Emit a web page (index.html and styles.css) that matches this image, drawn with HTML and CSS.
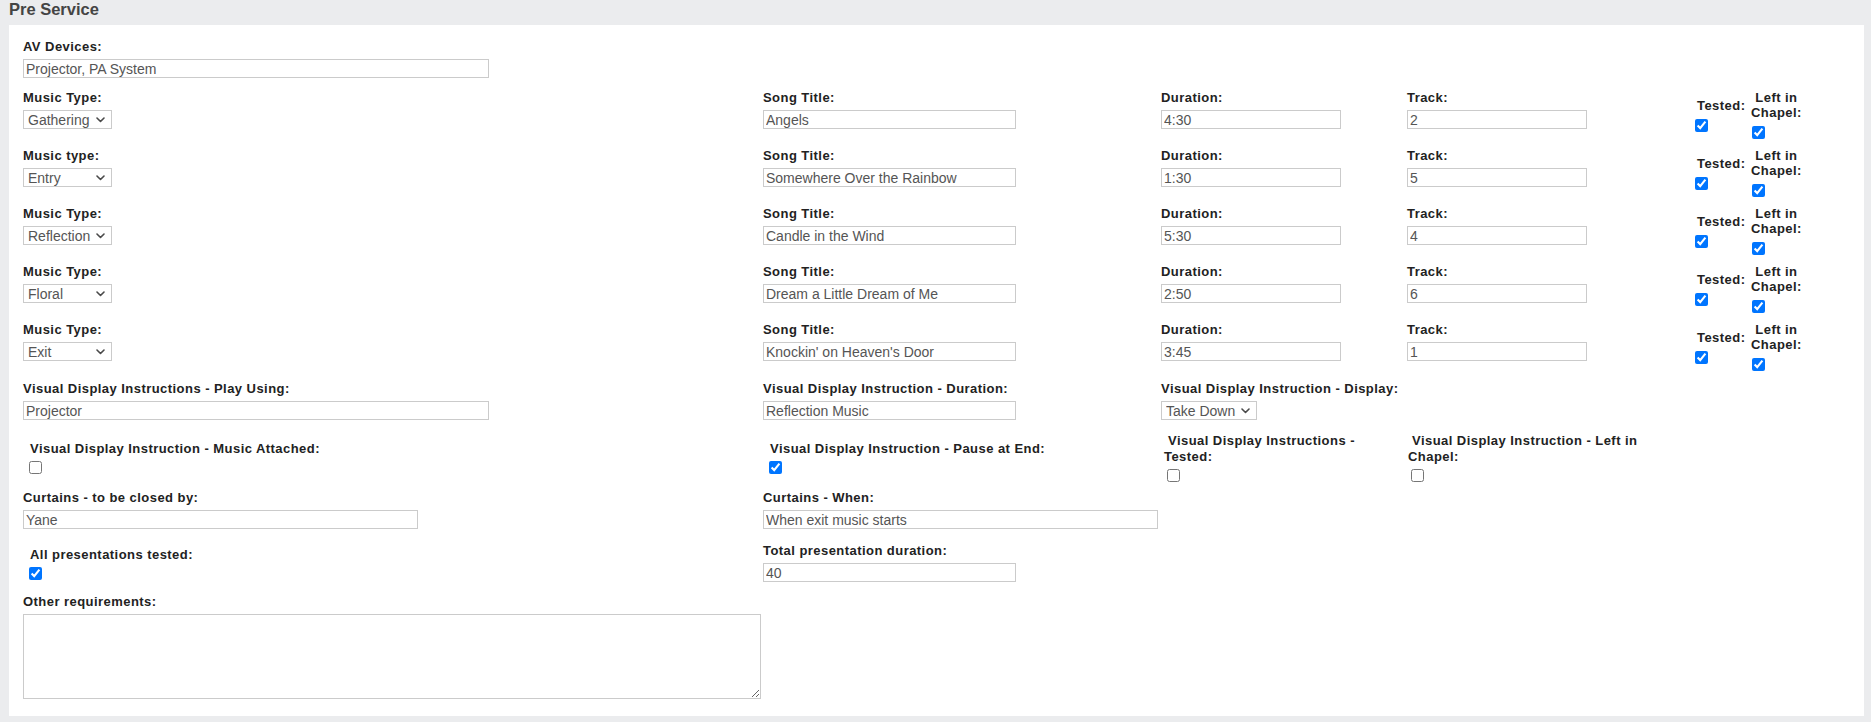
FILE: index.html
```html
<!DOCTYPE html>
<html lang="en">
<head>
<meta charset="utf-8">
<title>Pre Service</title>
<link rel="stylesheet" href="styles.css">
</head>
<body>
<div class="page">
  <h2 class="section-title">Pre Service</h2>
  <div class="panel">

    <div class="row row-av">
      <div class="field">
        <label class="lbl">AV Devices:</label>
        <input class="txt w-wide" type="text" value="Projector, PA System">
      </div>
    </div>

    <div class="row row-music">
      <div class="field">
        <label class="lbl">Music Type:</label>
        <span class="sel"><select class="w-type"><option selected>Gathering</option><option>Entry</option><option>Reflection</option><option>Floral</option><option>Exit</option></select><svg class="chev" width="9" height="6" viewBox="0 0 9 6"><polyline points="1,1 4.5,4.5 8,1" /></svg></span>
      </div>
      <div class="field"><label class="lbl">Song Title:</label><input class="txt w-song" type="text" value="Angels"></div>
      <div class="field"><label class="lbl">Duration:</label><input class="txt w-short" type="text" value="4:30"></div>
      <div class="field"><label class="lbl">Track:</label><input class="txt w-short" type="text" value="2"></div>
      <div class="checks">
        <div class="stack stack-tested"><span class="ck-lbl">Tested:</span><input type="checkbox" checked></div>
        <div class="stack stack-left"><span class="ck-lbl">Left in Chapel:</span><input type="checkbox" checked></div>
      </div>
    </div>

    <div class="row row-music">
      <div class="field">
        <label class="lbl">Music type:</label>
        <span class="sel"><select class="w-type"><option>Gathering</option><option selected>Entry</option><option>Reflection</option><option>Floral</option><option>Exit</option></select><svg class="chev" width="9" height="6" viewBox="0 0 9 6"><polyline points="1,1 4.5,4.5 8,1" /></svg></span>
      </div>
      <div class="field"><label class="lbl">Song Title:</label><input class="txt w-song" type="text" value="Somewhere Over the Rainbow"></div>
      <div class="field"><label class="lbl">Duration:</label><input class="txt w-short" type="text" value="1:30"></div>
      <div class="field"><label class="lbl">Track:</label><input class="txt w-short" type="text" value="5"></div>
      <div class="checks">
        <div class="stack stack-tested"><span class="ck-lbl">Tested:</span><input type="checkbox" checked></div>
        <div class="stack stack-left"><span class="ck-lbl">Left in Chapel:</span><input type="checkbox" checked></div>
      </div>
    </div>

    <div class="row row-music">
      <div class="field">
        <label class="lbl">Music Type:</label>
        <span class="sel"><select class="w-type"><option>Gathering</option><option>Entry</option><option selected>Reflection</option><option>Floral</option><option>Exit</option></select><svg class="chev" width="9" height="6" viewBox="0 0 9 6"><polyline points="1,1 4.5,4.5 8,1" /></svg></span>
      </div>
      <div class="field"><label class="lbl">Song Title:</label><input class="txt w-song" type="text" value="Candle in the Wind"></div>
      <div class="field"><label class="lbl">Duration:</label><input class="txt w-short" type="text" value="5:30"></div>
      <div class="field"><label class="lbl">Track:</label><input class="txt w-short" type="text" value="4"></div>
      <div class="checks">
        <div class="stack stack-tested"><span class="ck-lbl">Tested:</span><input type="checkbox" checked></div>
        <div class="stack stack-left"><span class="ck-lbl">Left in Chapel:</span><input type="checkbox" checked></div>
      </div>
    </div>

    <div class="row row-music">
      <div class="field">
        <label class="lbl">Music Type:</label>
        <span class="sel"><select class="w-type"><option>Gathering</option><option>Entry</option><option>Reflection</option><option selected>Floral</option><option>Exit</option></select><svg class="chev" width="9" height="6" viewBox="0 0 9 6"><polyline points="1,1 4.5,4.5 8,1" /></svg></span>
      </div>
      <div class="field"><label class="lbl">Song Title:</label><input class="txt w-song" type="text" value="Dream a Little Dream of Me"></div>
      <div class="field"><label class="lbl">Duration:</label><input class="txt w-short" type="text" value="2:50"></div>
      <div class="field"><label class="lbl">Track:</label><input class="txt w-short" type="text" value="6"></div>
      <div class="checks">
        <div class="stack stack-tested"><span class="ck-lbl">Tested:</span><input type="checkbox" checked></div>
        <div class="stack stack-left"><span class="ck-lbl">Left in Chapel:</span><input type="checkbox" checked></div>
      </div>
    </div>

    <div class="row row-music">
      <div class="field">
        <label class="lbl">Music Type:</label>
        <span class="sel"><select class="w-type"><option>Gathering</option><option>Entry</option><option>Reflection</option><option>Floral</option><option selected>Exit</option></select><svg class="chev" width="9" height="6" viewBox="0 0 9 6"><polyline points="1,1 4.5,4.5 8,1" /></svg></span>
      </div>
      <div class="field"><label class="lbl">Song Title:</label><input class="txt w-song" type="text" value="Knockin' on Heaven's Door"></div>
      <div class="field"><label class="lbl">Duration:</label><input class="txt w-short" type="text" value="3:45"></div>
      <div class="field"><label class="lbl">Track:</label><input class="txt w-short" type="text" value="1"></div>
      <div class="checks">
        <div class="stack stack-tested"><span class="ck-lbl">Tested:</span><input type="checkbox" checked></div>
        <div class="stack stack-left"><span class="ck-lbl">Left in Chapel:</span><input type="checkbox" checked></div>
      </div>
    </div>

    <div class="row row-vdi">
      <div class="field"><label class="lbl">Visual Display Instructions - Play Using:</label><input class="txt w-wide" type="text" value="Projector"></div>
      <div class="field"><label class="lbl">Visual Display Instruction - Duration:</label><input class="txt w-song" type="text" value="Reflection Music"></div>
      <div class="field">
        <label class="lbl">Visual Display Instruction - Display:</label>
        <span class="sel"><select class="w-display"><option selected>Take Down</option><option>Leave Up</option></select><svg class="chev" width="9" height="6" viewBox="0 0 9 6"><polyline points="1,1 4.5,4.5 8,1" /></svg></span>
      </div>
    </div>

    <div class="row row-flags">
      <div class="flag flag-single"><label class="flag-lbl">Visual Display Instruction - Music Attached:</label><input type="checkbox"></div>
      <div class="flag flag-single"><label class="flag-lbl">Visual Display Instruction - Pause at End:</label><input type="checkbox" checked></div>
      <div class="flag"><label class="flag-lbl">Visual Display Instructions - Tested:</label><input type="checkbox"></div>
      <div class="flag flag-tight"><label class="flag-lbl">Visual Display Instruction - Left in Chapel:</label><input type="checkbox"></div>
    </div>

    <div class="row row-curtains">
      <div class="field"><label class="lbl">Curtains - to be closed by:</label><input class="txt w-mid" type="text" value="Yane"></div>
      <div class="field"><label class="lbl">Curtains - When:</label><input class="txt w-mid" type="text" value="When exit music starts"></div>
    </div>

    <div class="row row-totals">
      <div class="flag flag-single flag-low"><label class="flag-lbl">All presentations tested:</label><input type="checkbox" checked></div>
      <div class="field"><label class="lbl">Total presentation duration:</label><input class="txt w-song" type="text" value="40"></div>
    </div>

    <div class="row row-other">
      <div class="field field-notes"><label class="lbl">Other requirements:</label><textarea class="notes"></textarea></div>
    </div>

  </div>
</div>
</body>
</html>
```

FILE: styles.css
```css
html, body {
  margin: 0;
  padding: 0;
}

body {
  background: #ebecee;
  font-family: "Liberation Sans", Arial, sans-serif;
  color: #222;
}

.page {
  display: flex;
  flex-direction: column;
  height: 722px;
}

.section-title {
  margin: 0;
  height: 25px;
  padding-left: 9px;
  font-size: 16.5px;
  line-height: 19px;
  font-weight: bold;
  color: #444;
}

.panel {
  background: #fff;
  margin: 0 7px 6px 9px;
  padding: 14px 14px 17px 14px;
  display: flex;
  flex-direction: column;
  flex: 1;
}

/* every form row shares the same column template */
.row {
  display: grid;
  grid-template-columns: 740px 398px 246px 288px 1fr;
  align-items: start;
}

.row-av + .row-music { margin-top: 12px; }
.row-music + .row-music { margin-top: 6px; }
.row-vdi { margin-top: 7px; }
.row-flags { margin-top: 6px; padding-top: 7px; align-items: center; }
.row-curtains { margin-top: 6px; }
.row-totals { margin-top: 14px; align-items: center; }
.row-other { margin-top: 12px; }

.field {
  display: flex;
  flex-direction: column;
  align-items: flex-start;
}

.field-notes {
  grid-column: 1 / span 2;
}

.lbl {
  display: block;
  font-size: 13px;
  line-height: 15px;
  font-weight: bold;
  letter-spacing: 0.45px;
  color: #222;
  margin-bottom: 5px;
  white-space: nowrap;
}

.txt {
  box-sizing: border-box;
  height: 19px;
  margin: 0;
  border: 1px solid #cbcbcb;
  padding: 0 2px;
  font-family: "Liberation Sans", Arial, sans-serif;
  font-size: 14px;
  color: #555;
  background: #fff;
  outline: none;
}

.w-wide { width: 466px; }
.w-song { width: 253px; }
.w-short { width: 180px; }
.w-mid { width: 395px; }

/* select with a drawn chevron */
.sel {
  position: relative;
  display: inline-block;
  height: 19px;
}

.sel select {
  -webkit-appearance: none;
  appearance: none;
  box-sizing: border-box;
  height: 19px;
  margin: 0;
  border: 1px solid #cbcbcb;
  border-radius: 0;
  padding: 0 14px 0 4px;
  font-family: "Liberation Sans", Arial, sans-serif;
  font-size: 14px;
  color: #555;
  background: #fff;
  outline: none;
}

.w-type { width: 89px; }
.w-display { width: 96px; }

.chev {
  position: absolute;
  right: 7px;
  top: 7px;
  pointer-events: none;
}

.chev polyline {
  fill: none;
  stroke: #4a4a4a;
  stroke-width: 1.6;
  stroke-linecap: round;
  stroke-linejoin: round;
}

/* tested / left-in-chapel pair */
.checks {
  display: flex;
  align-items: center;
  gap: 4px;
}

.stack {
  display: flex;
  flex-direction: column;
  align-items: flex-start;
}

.ck-lbl {
  display: block;
  font-size: 13px;
  line-height: 15px;
  font-weight: bold;
  letter-spacing: 0.45px;
  color: #222;
}

.stack-tested .ck-lbl {
  padding-left: 2px;
}

.stack-left {
  width: 54px;
}

.stack-left .ck-lbl {
  width: 100%;
  text-align: center;
}

.stack input[type="checkbox"] {
  display: block;
  width: 13px;
  height: 13px;
  margin: 6px 0 3px 0;
}

.stack-left input[type="checkbox"] {
  margin-left: 3px;
}

/* checkbox fields with a label above */
.flag {
  padding-left: 3px;
}

.flag-tight {
  padding-left: 1px;
}

.flag-low {
  margin-top: 4px;
}

.flag-lbl {
  display: block;
  max-width: 240px;
  text-indent: 4px;
  font-size: 13px;
  line-height: 16px;
  font-weight: bold;
  letter-spacing: 0.45px;
  color: #222;
}

.flag-single .flag-lbl {
  max-width: none;
  white-space: nowrap;
}

.flag input[type="checkbox"] {
  display: block;
  width: 13px;
  height: 13px;
  margin: 4px 0 2px 3px;
}

.notes {
  box-sizing: border-box;
  width: 738px;
  height: 85px;
  margin: 0;
  border: 1px solid #cbcbcb;
  padding: 2px;
  font-family: "Liberation Sans", Arial, sans-serif;
  font-size: 14px;
  color: #555;
  outline: none;
}
```
